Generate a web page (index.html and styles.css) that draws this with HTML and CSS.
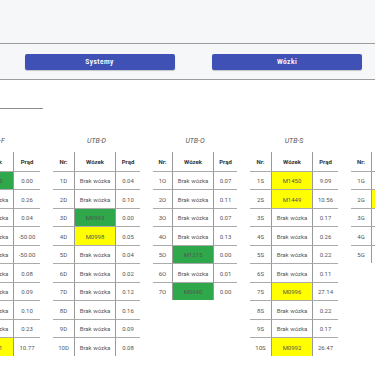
FILE: index.html
```html
<!DOCTYPE html>
<html lang="pl">
<head>
  <meta charset="UTF-8">
  <title>Wózki</title>
  <link rel="stylesheet" href="styles.css">
</head>
<body>
  <div class="topbar"></div>

  <nav class="nav">
    <button class="nav-btn">Systemy</button>
    <button class="nav-btn">Wózki</button>
  </nav>

  <main class="content">
    <div class="title-rule"></div>

    <div class="tables">
      <table class="utb utb-f">
        <caption>UTB-F</caption>
        <tr><th class="nr">Nr:</th><th class="cart">Wózek</th><th class="amp">Prąd</th></tr>
        <tr><td>1F</td><td class="green">M0995</td><td>0.00</td></tr>
        <tr><td>2F</td><td>Brak wózka</td><td>0.26</td></tr>
        <tr><td>3F</td><td>Brak wózka</td><td>0.04</td></tr>
        <tr><td>4F</td><td>Brak wózka</td><td>-50.00</td></tr>
        <tr><td>5F</td><td>Brak wózka</td><td>-50.00</td></tr>
        <tr><td>6F</td><td>Brak wózka</td><td>0.08</td></tr>
        <tr><td>7F</td><td>Brak wózka</td><td>0.09</td></tr>
        <tr><td>8F</td><td>Brak wózka</td><td>0.10</td></tr>
        <tr><td>9F</td><td>Brak wózka</td><td>0.23</td></tr>
        <tr><td>10F</td><td class="yellow">M0991</td><td>10.77</td></tr>
      </table>

      <table class="utb utb-d">
        <caption>UTB-D</caption>
        <tr><th class="nr">Nr:</th><th class="cart">Wózek</th><th class="amp">Prąd</th></tr>
        <tr><td>1D</td><td>Brak wózka</td><td>0.04</td></tr>
        <tr><td>2D</td><td>Brak wózka</td><td>0.10</td></tr>
        <tr><td>3D</td><td class="green">M0993</td><td>0.00</td></tr>
        <tr><td>4D</td><td class="yellow">M0998</td><td>0.05</td></tr>
        <tr><td>5D</td><td>Brak wózka</td><td>0.04</td></tr>
        <tr><td>6D</td><td>Brak wózka</td><td>0.02</td></tr>
        <tr><td>7D</td><td>Brak wózka</td><td>0.12</td></tr>
        <tr><td>8D</td><td>Brak wózka</td><td>0.16</td></tr>
        <tr><td>9D</td><td>Brak wózka</td><td>0.09</td></tr>
        <tr><td>10D</td><td>Brak wózka</td><td>0.08</td></tr>
      </table>

      <table class="utb utb-o">
        <caption>UTB-O</caption>
        <tr><th class="nr">Nr:</th><th class="cart">Wózek</th><th class="amp">Prąd</th></tr>
        <tr><td>1O</td><td>Brak wózka</td><td>0.07</td></tr>
        <tr><td>2O</td><td>Brak wózka</td><td>0.11</td></tr>
        <tr><td>3O</td><td>Brak wózka</td><td>0.07</td></tr>
        <tr><td>4O</td><td>Brak wózka</td><td>0.13</td></tr>
        <tr><td>5O</td><td class="green">M1215</td><td>0.00</td></tr>
        <tr><td>6O</td><td>Brak wózka</td><td>0.01</td></tr>
        <tr><td>7O</td><td class="green">M0940</td><td>0.00</td></tr>
      </table>

      <table class="utb utb-s">
        <caption>UTB-S</caption>
        <tr><th class="nr">Nr:</th><th class="cart">Wózek</th><th class="amp">Prąd</th></tr>
        <tr><td>1S</td><td class="yellow">M1450</td><td>9.09</td></tr>
        <tr><td>2S</td><td class="yellow">M1449</td><td>10.56</td></tr>
        <tr><td>3S</td><td>Brak wózka</td><td>0.17</td></tr>
        <tr><td>4S</td><td>Brak wózka</td><td>0.26</td></tr>
        <tr><td>5S</td><td>Brak wózka</td><td>0.22</td></tr>
        <tr><td>6S</td><td>Brak wózka</td><td>0.11</td></tr>
        <tr><td>7S</td><td class="yellow">M0996</td><td>27.14</td></tr>
        <tr><td>8S</td><td>Brak wózka</td><td>0.22</td></tr>
        <tr><td>9S</td><td>Brak wózka</td><td>0.17</td></tr>
        <tr><td>10S</td><td class="yellow">M0992</td><td>26.47</td></tr>
      </table>

      <table class="utb utb-g">
        <caption>UTB-G</caption>
        <tr><th class="nr">Nr:</th><th class="cart">Wózek</th><th class="amp">Prąd</th></tr>
        <tr><td>1G</td><td>Brak wózka</td><td>0.05</td></tr>
        <tr><td>2G</td><td class="yellow">M1452</td><td>8.91</td></tr>
        <tr><td>3G</td><td>Brak wózka</td><td>0.12</td></tr>
        <tr><td>4G</td><td>Brak wózka</td><td>0.03</td></tr>
        <tr><td>5G</td><td>Brak wózka</td><td>0.18</td></tr>
      </table>
    </div>
  </main>
</body>
</html>
```

FILE: styles.css
```css
* { box-sizing: border-box; }
body {
  margin: 0;
  width: 375px;
  height: 375px;
  overflow: hidden;
  font-family: Roboto, "Noto Sans", sans-serif;
  background: #fff;
}
.topbar {
  height: 44px;
  background: #f6f7f9;
  border-bottom: 1px solid #9c9c9c;
}
.nav {
  display: flex;
  gap: 37.5px;
  height: 36px;
  padding: 10px 0 0 24.5px;
  background: #f6f7f9;
  border-bottom: 1px solid #9c9c9c;
}
.nav-btn {
  width: 150px;
  height: 16px;
  padding: 0;
  border: none;
  border-radius: 2px;
  background: #3f51b5;
  color: #fff;
  font-family: Roboto, sans-serif;
  font-size: 6.5px;
  font-weight: 700;
  letter-spacing: 0.5px;
  box-shadow: 0 1px 1px rgba(0, 0, 0, 0.2);
}
.content {
  padding-top: 28px;
}
.title-rule {
  width: 43px;
  border-top: 1px solid #8c8c8c;
}
.tables {
  display: flex;
  align-items: flex-start;
  gap: 13px;
  margin: 28px 0 0 -49px;
}
.utb {
  flex: none;
  border-collapse: separate;
  border-spacing: 0;
  font-size: 6px;
}
.utb caption {
  font-style: italic;
  font-size: 7px;
  line-height: 9px;
  color: #555;
  padding-bottom: 5.8px;
}
.utb th, .utb td {
  padding: 0;
  text-align: center;
  white-space: nowrap;
}
.utb th {
  height: 19px;
  font-weight: 700;
  color: #333;
}
.utb td {
  height: 18.5px;
  border-top: 1px solid #ababab;
  color: #555;
}
.utb th + th, .utb td + td {
  border-left: 1px solid #999;
}
.utb .cart { width: 41px; }
.utb-f .nr { width: 21px; }
.utb-f .amp { width: 27px; }
.utb-d .nr { width: 21px; }
.utb-d .amp { width: 25px; }
.utb-o .nr { width: 19px; }
.utb-o .amp { width: 24px; }
.utb-s .nr { width: 21px; }
.utb-s .amp { width: 26px; }
.utb-g .nr { width: 20px; }
.utb-g .amp { width: 25px; }
.green { background: #2ea84a; }
.yellow { background: #ffff00; }
```
